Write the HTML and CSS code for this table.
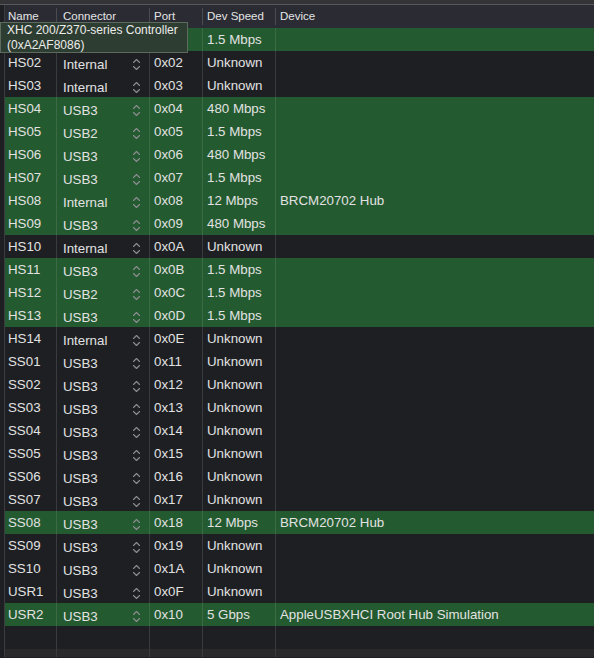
FILE: index.html
```html
<!DOCTYPE html>
<html>
<head>
<meta charset="utf-8">
<link rel="stylesheet" href="styles.css">
</head>
<body>
<div class="window">
  <div class="topband"></div>
  <div class="table">
    <div class="row head">
      <div class="cell c-name">Name</div>
      <div class="cell c-conn">Connector</div>
      <div class="cell c-port">Port</div>
      <div class="cell c-speed">Dev Speed</div>
      <div class="cell c-dev">Device</div>
    </div>
    <div id="rows"></div>
    <div class="row empty">
      <div class="cell c-name"></div><div class="cell c-conn"></div><div class="cell c-port"></div><div class="cell c-speed"></div><div class="cell c-dev"></div>
    </div>
    <div class="row footer">
      <div class="cell c-name"></div><div class="cell c-conn"></div><div class="cell c-port"></div><div class="cell c-speed"></div><div class="cell c-dev"></div>
    </div>
  </div>
  <div class="tooltip">XHC 200/Z370-series Controller<br>(0xA2AF8086)</div>
</div>
<script src="app.js"></script>
</body>
</html>
```

FILE: app.js
```js
const data = [
  ["HS01","USB3","0x01","1.5 Mbps","",1],
  ["HS02","Internal","0x02","Unknown","",0],
  ["HS03","Internal","0x03","Unknown","",0],
  ["HS04","USB3","0x04","480 Mbps","",1],
  ["HS05","USB2","0x05","1.5 Mbps","",1],
  ["HS06","USB3","0x06","480 Mbps","",1],
  ["HS07","USB3","0x07","1.5 Mbps","",1],
  ["HS08","Internal","0x08","12 Mbps","BRCM20702 Hub",1],
  ["HS09","USB3","0x09","480 Mbps","",1],
  ["HS10","Internal","0x0A","Unknown","",0],
  ["HS11","USB3","0x0B","1.5 Mbps","",1],
  ["HS12","USB2","0x0C","1.5 Mbps","",1],
  ["HS13","USB3","0x0D","1.5 Mbps","",1],
  ["HS14","Internal","0x0E","Unknown","",0],
  ["SS01","USB3","0x11","Unknown","",0],
  ["SS02","USB3","0x12","Unknown","",0],
  ["SS03","USB3","0x13","Unknown","",0],
  ["SS04","USB3","0x14","Unknown","",0],
  ["SS05","USB3","0x15","Unknown","",0],
  ["SS06","USB3","0x16","Unknown","",0],
  ["SS07","USB3","0x17","Unknown","",0],
  ["SS08","USB3","0x18","12 Mbps","BRCM20702 Hub",1],
  ["SS09","USB3","0x19","Unknown","",0],
  ["SS10","USB3","0x1A","Unknown","",0],
  ["USR1","USB3","0x0F","Unknown","",0],
  ["USR2","USB3","0x10","5 Gbps","AppleUSBXHCI Root Hub Simulation",1]
];
const stepper = '<svg class="stepper" width="9" height="13" viewBox="0 0 9 13"><path d="M1.5 4.5 L4.5 1.5 L7.5 4.5 M1.5 8.5 L4.5 11.5 L7.5 8.5" fill="none" stroke="#8e8e92" stroke-width="1.1" stroke-linecap="round" stroke-linejoin="round"/></svg>';
const rows = document.getElementById("rows");
rows.innerHTML = data.map(d =>
  '<div class="row ' + (d[5] ? 'on' : 'off') + '">' +
  '<div class="cell c-name">' + d[0] + '</div>' +
  '<div class="cell c-conn"><span class="conn-text">' + d[1] + '</span>' + stepper + '</div>' +
  '<div class="cell c-port">' + d[2] + '</div>' +
  '<div class="cell c-speed">' + d[3] + '</div>' +
  '<div class="cell c-dev">' + d[4] + '</div>' +
  '</div>'
).join("");
```

FILE: styles.css
```css
html, body {
  margin: 0;
  padding: 0;
  background: #1e1f22;
}
body {
  font-family: "Liberation Sans", Arial, sans-serif;
  color: #e2e2e2;
}
.window {
  position: relative;
  width: 594px;
  height: 658px;
  overflow: hidden;
  background: #1e1f22;
}
.topband {
  height: 4px;
  background: #343437;
  border-bottom: 1px solid #58585c;
}
.table {
  margin-left: 4px;
  border-left: 1px solid #3c3c40;
}
.row {
  display: grid;
  grid-template-columns: 52px 93px 53px 73px 1fr;
  height: 23px;
}
.cell {
  border-right: 1px solid #3a3b3e;
  font-size: 13.3px;
  line-height: 23px;
  padding-left: 4px;
  white-space: nowrap;
  overflow: hidden;
}
.cell.c-name {
  padding-left: 3px;
}
.cell.c-dev {
  border-right: none;
}
.head {
  background: #2b2c33;
}
.head .cell {
  font-size: 11.5px;
  line-height: 23px;
  color: #e4e4e6;
  border-right: none;
  position: relative;
}
.head .cell:not(.c-dev)::after {
  content: "";
  position: absolute;
  right: 0;
  top: 3px;
  bottom: 3px;
  width: 1px;
  background: #4a4b52;
}
.head .c-conn { padding-left: 6px; }
.on {
  background: #245a30;
}
.on .cell {
  border-right-color: #3b6a45;
}
.off {
  background: #1e1f22;
}
.c-conn {
  display: flex;
  align-items: center;
  justify-content: space-between;
  padding-left: 6px;
  padding-right: 8px;
}
.conn-text {
  padding-top: 4px;
  line-height: 19px;
}
.stepper {
  margin-top: 4px;
}
.empty {
  background: #1e1f22;
}
.footer {
  background: #2a2a2d;
  height: 8px;
}
.tooltip {
  position: absolute;
  left: 0;
  top: 22px;
  width: 180px;
  height: 29px;
  padding: 0 0 0 6px;
  background: #2e3d31;
  border: 1px solid #5d6b5f;
  font-size: 12px;
  line-height: 15px;
  color: #ececec;
}
```
